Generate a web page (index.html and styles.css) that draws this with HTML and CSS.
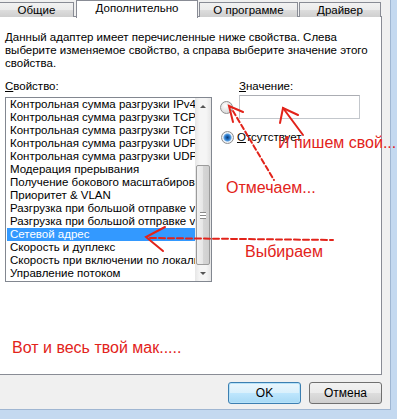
FILE: index.html
```html
<!DOCTYPE html>
<html lang="ru">
<head>
    <meta charset="UTF-8">
    <title>Свойства сетевого адаптера</title>
    <link rel="stylesheet" href="styles.css">
</head>
<body>
    <div class="screen">
        <div class="dialog">
            <div class="tabs">
                <div class="tab tab-first">Общие</div>
                <div class="tab active">Дополнительно</div>
                <div class="tab tab-about">О программе</div>
                <div class="tab tab-driver">Драйвер</div>
            </div>

            <div class="panel">
                <p class="desc">Данный адаптер имеет перечисленные ниже свойства. Слева<br>выберите изменяемое свойство, а справа выберите значение этого<br>свойства.</p>

                <div class="props">
                    <div class="prop-col">
                        <div class="label"><u>С</u>войство:</div>
                        <div class="listbox">
                            <ul class="items">
                                <li>Контрольная сумма разгрузки IPv4</li>
                                <li>Контрольная сумма разгрузки TCP (IPv4)</li>
                                <li>Контрольная сумма разгрузки TCP (IPv6)</li>
                                <li>Контрольная сумма разгрузки UDP (IPv4)</li>
                                <li>Контрольная сумма разгрузки UDP (IPv6)</li>
                                <li>Модерация прерывания</li>
                                <li>Получение бокового масштабирования</li>
                                <li>Приоритет &amp; VLAN</li>
                                <li>Разгрузка при большой отправке v2 (IPv4)</li>
                                <li>Разгрузка при большой отправке v2 (IPv6)</li>
                                <li class="selected">Сетевой адрес</li>
                                <li>Скорость и дуплекс</li>
                                <li>Скорость при включении по локальной сети</li>
                                <li>Управление потоком</li>
                            </ul>
                            <div class="scrollbar">
                                <div class="sb-btn"><span class="arrow-up"></span></div>
                                <div class="sb-track">
                                    <div class="sb-thumb"><span class="grip"></span></div>
                                </div>
                                <div class="sb-btn"><span class="arrow-down"></span></div>
                            </div>
                        </div>
                    </div>

                    <div class="value-col">
                        <div class="label value-label"><u>З</u>начение:</div>
                        <div class="value-row">
                            <span class="radio"></span>
                            <div class="textbox"></div>
                        </div>
                        <div class="value-row none-row">
                            <span class="radio checked"></span>
                            <span class="radio-text"><u>О</u>тсутствует</span>
                        </div>
                    </div>
                </div>
            </div>

            <div class="buttons">
                <button class="btn default">OK</button>
                <button class="btn">Отмена</button>
            </div>
        </div>
        <div class="frame-right"></div>
        <div class="frame-bottom"></div>

        <!-- red notes drawn on top of the screenshot -->
        <svg class="notes" width="397" height="419" viewBox="0 0 397 419">
            <g fill="none" stroke="#e2231a" stroke-width="2" stroke-linecap="round">
                <path d="M150 238 L333 240" stroke-dasharray="6 3"/>
                <path d="M165 227 L146 237 L163 251"/>
                <path d="M233 111 L274 180" stroke-dasharray="5 3"/>
                <path d="M243 112 L229 106 L233 122"/>
                <path d="M303 135 L283 108"/>
                <path d="M280 123 L283 108 L298 115"/>
            </g>
        </svg>
        <span class="note note-write">И пишем свой...</span>
        <span class="note note-mark">Отмечаем...</span>
        <span class="note note-pick">Выбираем</span>
        <span class="note note-mac">Вот и весь твой мак.....</span>
    </div>
</body>
</html>
```

FILE: styles.css
```css
body { margin: 0; font-family: "Liberation Sans", Arial, sans-serif; font-size: 11.5px; color: #000; }
.screen { position: relative; width: 397px; height: 419px; display: grid; grid-template-columns: 391px 6px; grid-template-rows: 410px 9px; overflow: hidden; }
.dialog { background-color: #f0f0f0; border-right: 1px solid #9fb6d2; border-bottom: 1px solid #9fb6d2; box-sizing: border-box; }
.frame-right { background-color: #c4d9f0; }
.frame-bottom { grid-column: 1 / 3; background-color: #c4d9f0; }

/* tabs */
.tabs { display: flex; align-items: flex-end; height: 17px; }
.tab { height: 15px; line-height: 14px; text-align: center; border: 1px solid #898c95; border-bottom: none; box-sizing: border-box; background: linear-gradient(#f2f2f2, #ebebeb 50%, #dddddd 51%, #cfcfcf); }
.tab-first { width: 74px; border-left: none; }
.tab.active { width: 122px; height: 18px; line-height: 14px; margin-left: 2px; margin-bottom: -1px; background: #fff; position: relative; z-index: 1; }
.tab-about { width: 99px; margin-left: 1px; }
.tab-driver { width: 82px; margin-left: 1px; }

/* page */
.panel { width: 382px; height: 359px; margin-top: -1px; background: #fff; border: 1px solid #898c95; border-left: none; box-sizing: border-box; }
.desc { margin: 0; padding: 14px 0 0 5px; line-height: 13px; white-space: nowrap; }
.props { display: grid; grid-template-columns: 207px 1fr; column-gap: 8px; padding-left: 5px; margin-top: 10px; }
.label { line-height: 13px; height: 13px; margin-bottom: 4px; }
.value-label { padding-left: 19px; margin-bottom: 2px; }

.listbox { display: flex; height: 185px; border: 1px solid #828790; box-sizing: border-box; }
.items { list-style: none; margin: 0; padding: 0; flex: 1; min-width: 0; }
.items li { height: 13px; line-height: 13px; padding-left: 3px; margin-left: 1px; white-space: nowrap; overflow: hidden; }
.items li.selected { background: #3399ff; color: #fff; }

.scrollbar { width: 16px; display: flex; flex-direction: column; background: linear-gradient(90deg, #e6e6e6, #f5f5f5 30%, #f5f5f5 70%, #e6e6e6); }
.sb-btn { height: 17px; display: flex; align-items: center; justify-content: center; }
.sb-btn:last-child { height: 16px; }
.arrow-up { width: 0; height: 0; border-left: 3px solid transparent; border-right: 3px solid transparent; border-bottom: 3px solid #555; }
.arrow-down { width: 0; height: 0; border-left: 3px solid transparent; border-right: 3px solid transparent; border-top: 3px solid #555; }
.sb-track { flex: 1; display: flex; flex-direction: column; padding-top: 50px; }
.sb-thumb { flex: 1; margin: 0 1px; border: 1px solid #9b9b9b; border-radius: 2px; background: linear-gradient(90deg, #f1f1f1, #e6e6e6 50%, #d6d6d6 51%, #cfcfcf); display: flex; align-items: center; justify-content: center; }
.grip { width: 6px; height: 5px; border-top: 1px solid #8a8a8a; border-bottom: 1px solid #8a8a8a; background: linear-gradient(#fff 0, #fff 2px, #8a8a8a 2px, #8a8a8a 3px, #fff 3px); }

.value-row { display: flex; align-items: center; }
.radio { width: 13px; height: 13px; border-radius: 50%; border: 1px solid #8f8f8f; box-sizing: border-box; background: radial-gradient(circle at 40% 35%, #ffffff, #e2e2e2 55%, #cfcfcf); }
.radio.checked { margin-left: 1px; background: radial-gradient(circle, #0a3a70 0, #1f6cc0 2px, #5ba0e0 3.5px, #eef4fb 4.5px, #d9d9d9); }
.textbox { width: 121px; height: 24px; margin-left: 6px; border: 1px solid #c3c7cc; border-top-color: #abadb3; box-sizing: border-box; background: #fff; }
.none-row { margin-top: 12px; }
.radio-text { margin-left: 3px; line-height: 13px; }

/* bottom buttons */
.buttons { display: flex; justify-content: flex-end; gap: 8px; padding: 7px 8px 0 0; }
.btn { width: 73px; height: 22px; padding: 0; font-family: inherit; font-size: 12px; color: #000; border: 1px solid #707070; border-radius: 3px; background: linear-gradient(#f2f2f2, #ebebeb 50%, #dddddd 51%, #cfcfcf); }
.btn.default { border-color: #3c7fb1; box-shadow: inset 0 0 0 1px #b6e2f9; background: linear-gradient(#eaf6fd, #d9f0fc 50%, #bee6fd 51%, #a7d9f5); }

/* notes on top */
.notes { position: absolute; left: 0; top: 0; pointer-events: none; }
.note { position: absolute; color: #e2231a; font-size: 16px; line-height: 16px; white-space: nowrap; }
.note-write { left: 278px; top: 135px; }
.note-mark { left: 226px; top: 180px; }
.note-pick { left: 245px; top: 244px; }
.note-mac { left: 12px; top: 340px; }
```
